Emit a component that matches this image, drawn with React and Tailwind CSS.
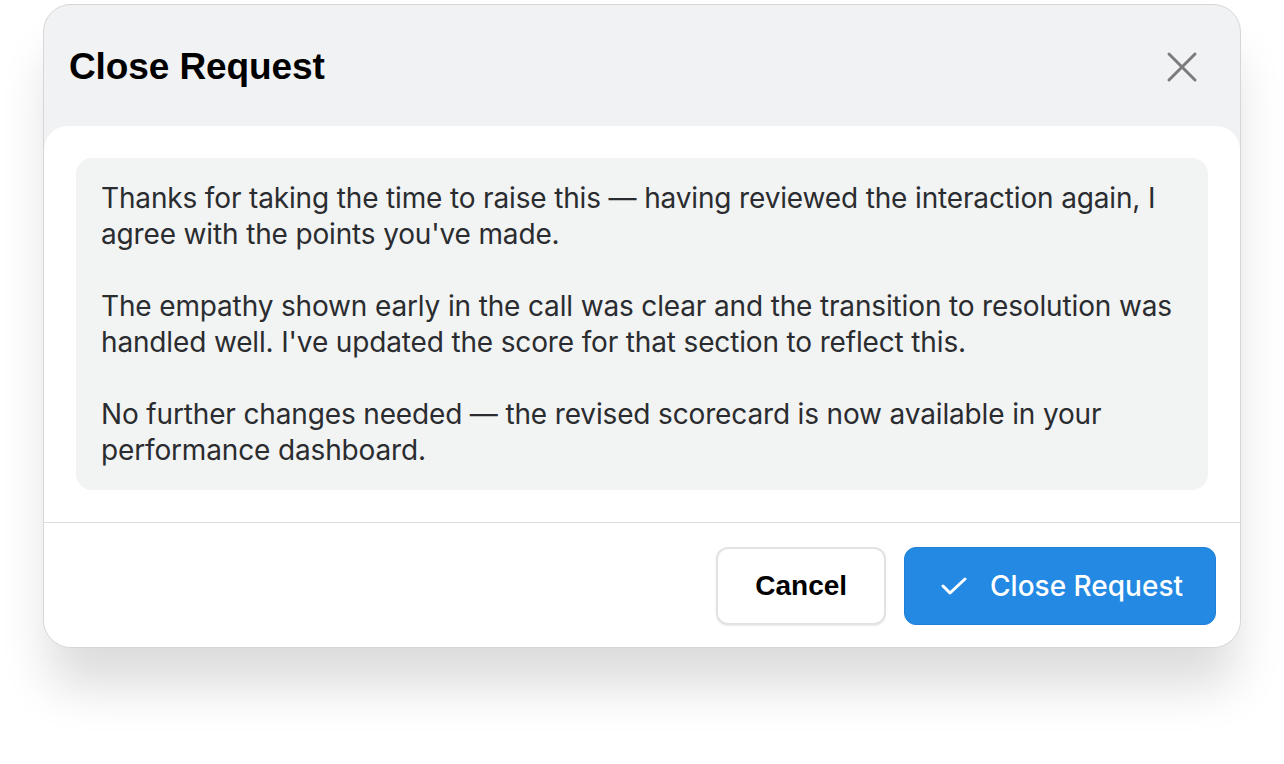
import React from 'react';

const paragraphs = [
  "Thanks for taking the time to raise this — having reviewed the interaction again, I agree with the points you've made.",
  "The empathy shown early in the call was clear and the transition to resolution was handled well. I've updated the score for that section to reflect this.",
  "No further changes needed — the revised scorecard is now available in your performance dashboard.",
];

function XIcon() {
  return (
    <svg width="32" height="32" viewBox="0 0 32 32" fill="none" stroke="#7b7b7d" strokeWidth="3" strokeLinecap="round">
      <path d="M3 3L29 29" />
      <path d="M29 3L3 29" />
    </svg>
  );
}

function CheckIcon() {
  return (
    <svg width="26" height="20" viewBox="0 0 26 20" fill="none" stroke="white" strokeWidth="3" strokeLinecap="round" strokeLinejoin="round">
      <path d="M2 10L9 17L24 3" />
    </svg>
  );
}

export default function App() {
  return (
    <div className="min-h-screen bg-white pl-[43px] pr-[43px] pt-[4px]">
      <div className="w-[1198px] rounded-[28px] border border-[#d6d6d8] bg-[#f1f2f4] shadow-[0_44px_50px_-6px_rgba(0,0,0,0.14)] overflow-hidden">
        <div className="flex items-center justify-between h-[121px] pl-[25px] pr-[42px] pt-[2px]">
          <h1 className="text-[37px] font-bold text-black tracking-[-0.1px] [font-family:'Liberation_Sans',Arial,sans-serif]">
            Close Request
          </h1>
          <button aria-label="Close" className="w-[32px] h-[32px] flex items-center justify-center">
            <XIcon />
          </button>
        </div>

        <div className="bg-white rounded-t-[24px]">
          <div className="px-[32px] pt-[32px] pb-[32px] border-b border-[#dcdcdc]">
            <div className="rounded-[16px] bg-[#f2f3f3] pl-[25px] pr-[20px] py-[22px] text-[28px] leading-[36px] tracking-[-0.15px] text-[#2a2c2f] [font-family:Inter,'Noto_Sans',sans-serif]">
              {paragraphs.map((p, i) => (
                <p key={i} className={i > 0 ? "mt-[36px]" : ""}>
                  {p}
                </p>
              ))}
            </div>
          </div>

          <div className="flex justify-end gap-[18px] pt-[24px] pb-[22px] pr-[24px]">
            <button className="h-[78px] px-[37px] rounded-[12px] border-2 border-[#e2e2e4] bg-white text-[28px] font-bold text-black shadow-[0_1px_2px_rgba(0,0,0,0.08)] [font-family:'Liberation_Sans',Arial,sans-serif]">
              Cancel
            </button>
            <button className="h-[78px] pl-[36px] pr-[32px] rounded-[12px] border border-[#1f7fd4] bg-[#2389e3] flex items-center gap-[23px] text-[28px] font-medium text-white [font-family:Inter,'Noto_Sans',sans-serif]">
              <CheckIcon />
              Close Request
            </button>
          </div>
        </div>
      </div>
    </div>
  );
}
